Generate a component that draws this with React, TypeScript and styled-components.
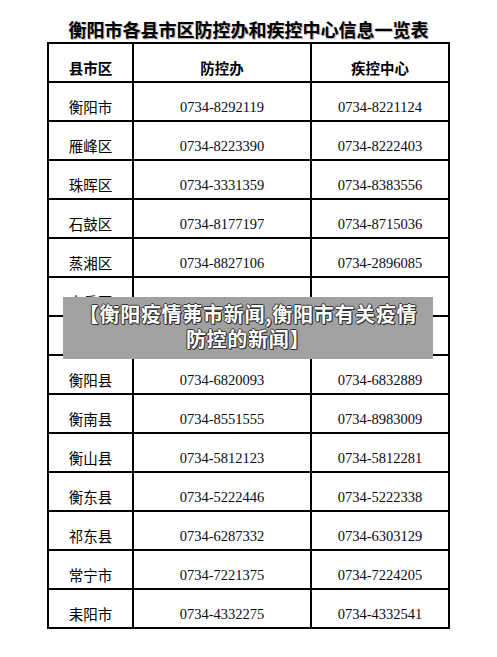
import { Fragment } from "react";
import styled, { createGlobalStyle } from "styled-components";

const Global = createGlobalStyle`
  html, body {
    margin: 0;
    padding: 0;
    background: #ffffff;
  }
  * {
    box-sizing: border-box;
  }
`;

const Page = styled.div`
  position: relative;
  width: 497px;
  padding-left: 47px;
  font-family: "Noto Sans CJK SC", "Noto Sans", sans-serif;
  color: #000;
`;

const Title = styled.h1`
  margin: 0;
  height: 42px;
  padding-top: 18px;
  padding-right: 47px;
  font-size: 18px;
  line-height: 22px;
  font-weight: 700;
  text-align: center;
  text-shadow: 1px 1px 1px rgba(0, 0, 0, 0.35);
`;

const Table = styled.div`
  display: grid;
  grid-template-columns: 85px 178px 138px;
  width: 403px;
  border-top: 2px solid #000;
  border-left: 2px solid #000;
`;

const Cell = styled.div<{ $head?: boolean; $num?: boolean }>`
  height: 39px;
  padding-top: 12px;
  border-right: 2px solid #000;
  border-bottom: 2px solid #000;
  display: flex;
  align-items: center;
  justify-content: center;
  line-height: 1;
  white-space: nowrap;
  font-family: ${(p) =>
    p.$num
      ? '"Liberation Serif", "Times New Roman", serif'
      : '"Noto Sans CJK SC", "Noto Sans", sans-serif'};
  font-size: 14.5px;
  font-weight: ${(p) => (p.$head ? 700 : 400)};
  color: ${(p) => (p.$num ? "#0a0a14" : "#000")};
`;

const Banner = styled.div`
  position: absolute;
  left: 63px;
  top: 297px;
  width: 370px;
  height: 62px;
  padding: 4px 4px 8px;
  background: #a1a1a1;
  color: #fff;
  font-family: "Noto Sans CJK SC", "Noto Sans", sans-serif;
  font-size: 20px;
  font-weight: 700;
  line-height: 25px;
  letter-spacing: 0.7px;
  text-align: center;
  text-shadow: -1px 0 0 #333, 1px 0 0 #333, 0 1px 0 #333, 0 -1px 0 #333,
    1px 1px 0 #222;
`;

const rows: [string, string, string][] = [
  ["衡阳市", "0734-8292119", "0734-8221124"],
  ["雁峰区", "0734-8223390", "0734-8222403"],
  ["珠晖区", "0734-3331359", "0734-8383556"],
  ["石鼓区", "0734-8177197", "0734-8715036"],
  ["蒸湘区", "0734-8827106", "0734-2896085"],
  ["南岳区", "0734-5662342", "0734-5662120"],
  ["高新区", "0734-8890316", "0734-8890258"],
  ["衡阳县", "0734-6820093", "0734-6832889"],
  ["衡南县", "0734-8551555", "0734-8983009"],
  ["衡山县", "0734-5812123", "0734-5812281"],
  ["衡东县", "0734-5222446", "0734-5222338"],
  ["祁东县", "0734-6287332", "0734-6303129"],
  ["常宁市", "0734-7221375", "0734-7224205"],
  ["耒阳市", "0734-4332275", "0734-4332541"],
];

export default function App() {
  return (
    <>
      <Global />
      <Page>
        <Title>衡阳市各县市区防控办和疾控中心信息一览表</Title>
        <Table>
          <Cell $head>县市区</Cell>
          <Cell $head>防控办</Cell>
          <Cell $head>疾控中心</Cell>
          {rows.map(([name, office, cdc]) => (
            <Fragment key={name}>
              <Cell>{name}</Cell>
              <Cell $num>{office}</Cell>
              <Cell $num>{cdc}</Cell>
            </Fragment>
          ))}
        </Table>
        <Banner>
          【衡阳疫情茀市新闻,衡阳市有关疫情
          <br />
          防控的新闻】
        </Banner>
      </Page>
    </>
  );
}
